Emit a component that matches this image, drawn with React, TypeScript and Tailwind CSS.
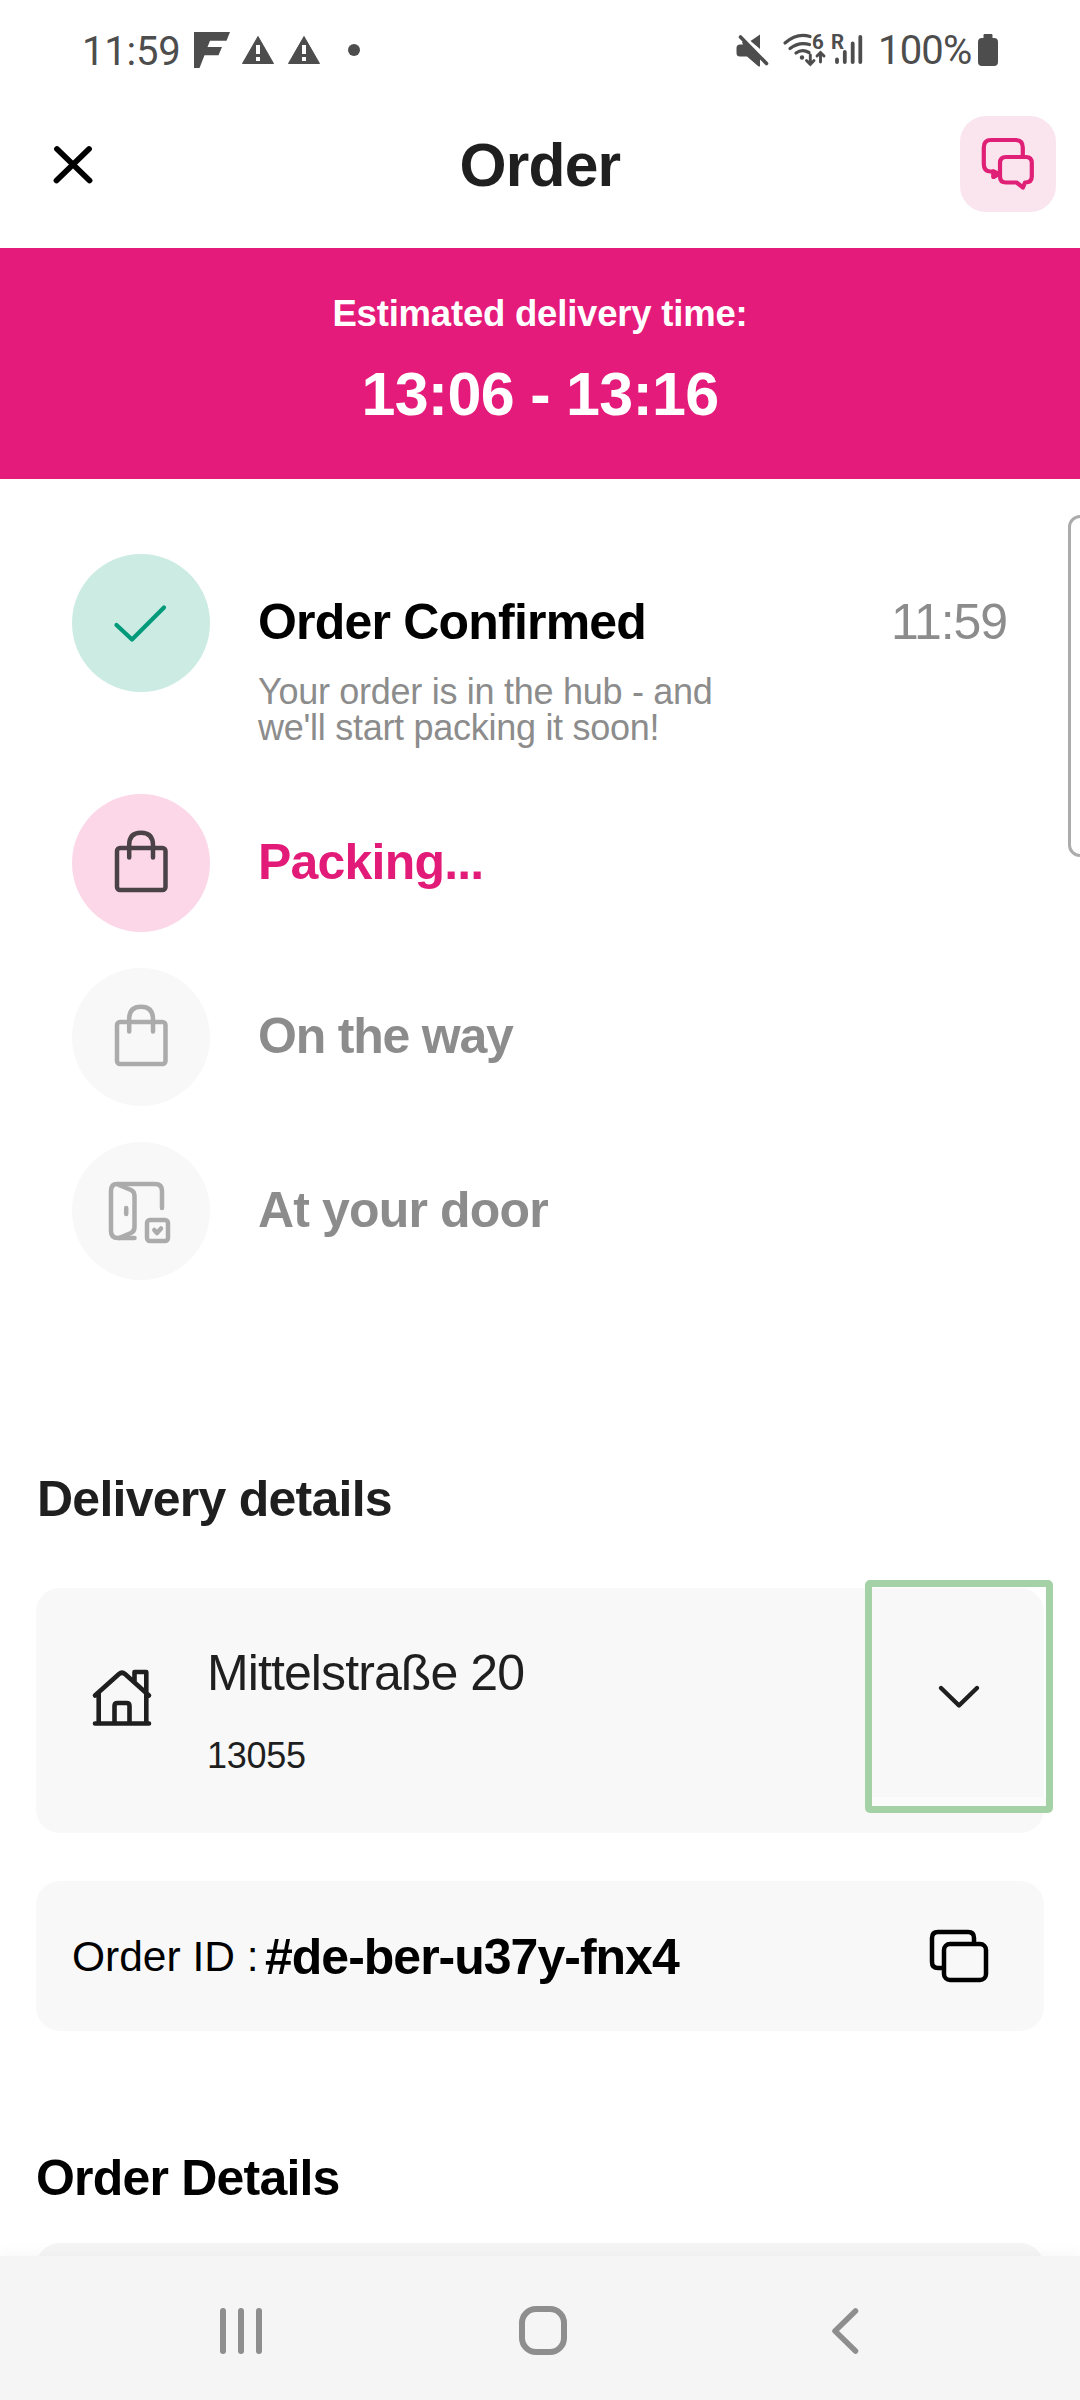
import type { ReactNode } from "react";

function StatusBar() {
  return (
    <div className="flex h-[100px] items-center pl-[82px] font-[Roboto,sans-serif] text-[40px] leading-[48px] text-[#4d4d4d]">
      <span className="mt-1 w-[112px] tracking-[-0.2px]">11:59</span>
      <svg width="36" height="36" viewBox="0 0 36 36" fill="currentColor">
        <path d="M0 0H36L32.5 8.7H16L13.5 15H28L24.5 23.2H10.5L5.5 36H0Z" />
      </svg>
      <WarningIcon className="ml-[12px]" />
      <WarningIcon className="ml-[14px]" />
      <span className="ml-[28px] size-[12px] rounded-full bg-[#4d4d4d]" />
      <svg className="ml-[376px]" width="33" height="34" viewBox="736 33 33 34" fill="currentColor">
        <path d="M760 34.500V49L750.500 41Z" />
        <path d="M736.500 48Q736.500 44.500 740 44.500H743L742 42L745 41L760 56V66Q760 67 758 66L747 56.500H740Q736.500 56.500 736.500 53Z" />
        <path d="M740.500 37L766.500 63.500" stroke="currentColor" strokeWidth="3.600" strokeLinecap="round" />
      </svg>
      <svg
        className="ml-[13px] overflow-visible"
        width="44"
        height="34"
        viewBox="782 33 44 34"
        fill="none"
        stroke="currentColor"
        strokeWidth="3.200"
        strokeLinecap="round"
      >
        <path d="M785 43Q797 32.500 810 36.500M790 48.500Q799 41.500 809.500 44.500M796 53Q802 48.500 809 52.500" />
        <circle cx="802" cy="57.500" r="2.200" fill="currentColor" stroke="none" />
        <path d="M810.300 55V64.500M806.500 60.500L810.300 64.500L814 60.500M820.500 62V53M817 56L820.500 52.500L824 56" strokeWidth="2.900" />
        <text x="812" y="49" fontSize="20.500" fontWeight="700" fill="currentColor" stroke="none">6</text>
      </svg>
      <svg
        className="ml-[6px] overflow-visible"
        width="32"
        height="34"
        viewBox="832 33 32 34"
        fill="none"
        stroke="currentColor"
        strokeWidth="3.800"
        strokeLinecap="round"
      >
        <path d="M837 59.500V62M844.800 52V62M852.700 43.500V62M860.300 37V62" />
        <text x="831" y="49" fontSize="20.500" fontWeight="700" fill="currentColor" stroke="none">R</text>
      </svg>
      <span className="mt-[2px] ml-[14px] w-[99px] tracking-[-0.8px]">100%</span>
      <svg className="ml-px" width="20" height="32" viewBox="0 0 20 32" fill="currentColor">
        <path d="M5.500 4V1Q5.500 0 6.500 0H13.500Q14.500 0 14.500 1V4H16Q20 4 20 8V28Q20 32 16 32H4Q0 32 0 28V8Q0 4 4 4Z" />
      </svg>
    </div>
  );
}

function WarningIcon({ className }: { className: string }) {
  return (
    <svg className={className} width="32" height="28" viewBox="0 0 32 28">
      <path d="M16 .5L31.500 27.500H.5Z" fill="currentColor" stroke="currentColor" strokeLinejoin="round" />
      <path d="M14 9h4v9h-4zM14 21h4v4h-4z" fill="#fff" />
    </svg>
  );
}

function Header() {
  return (
    <div className="grid h-[128px] grid-cols-[96px_1fr_96px] items-center px-6">
      <svg className="mt-px ml-[29px]" width="40" height="40" viewBox="53 145 40 40" fill="none" stroke="#000" strokeWidth="5.800" strokeLinecap="round">
        <path d="M57 149L89.500 180.500M89 149L56.500 180.500" />
      </svg>
      <h1 className="mt-px text-center text-[60.500px] leading-[64px] font-bold tracking-[-0.8px] text-[#1f1f1f]">Order</h1>
      <div className="size-24 rounded-[26px] bg-[#fae5ee]">
        <svg width="96" height="96" viewBox="960 116 96 96" fill="none" stroke="#e01f76" strokeWidth="4.200" strokeLinejoin="round" strokeLinecap="round">
          <path d="M1022.800 156V147.500Q1022.800 140 1015.500 140H991Q983.800 140 983.800 147.500V164Q983.800 171 990 171.500H993.500V177L999 173.500" />
          <path d="M993.500 171.500V177L999 174Z" fill="#e01f76" />
          <path d="M1006 157H1026Q1031.800 157 1031.800 163V176.500Q1031.800 182.500 1025 182.500L1023 187.500L1016.500 182.500H1006Q1000 182.500 1000 176.500V163Q1000 157 1006 157Z" />
        </svg>
      </div>
    </div>
  );
}

function BagIcon({ color }: { color: string }) {
  return (
    <svg width="138" height="138" viewBox="72 794 138 138" fill="none" stroke={color} strokeWidth="4.500" strokeLinecap="round">
      <rect x="117" y="848" width="48.500" height="42" rx="3" />
      <path d="M129.200 857.500V845Q129.200 832.800 141 832.800T153 845V857.500" />
    </svg>
  );
}

function CheckIcon() {
  return (
    <svg width="138" height="138" viewBox="72 554 138 138" fill="none" stroke="#009a7b" strokeWidth="4.200" strokeLinecap="round" strokeLinejoin="round">
      <path d="M116.500 625L132 639.500L164 607.500" />
    </svg>
  );
}

function DoorIcon() {
  return (
    <svg width="138" height="138" viewBox="72 1142 138 138" fill="none" stroke="#ababab" strokeWidth="4.500" strokeLinecap="round" strokeLinejoin="round">
      <path d="M162 1208V1191Q162 1184 155 1184H117Q111 1184 111 1191V1231Q111 1238 118 1238H134.500" />
      <path d="M119 1185L131 1190Q134.500 1191.500 134.500 1196V1227Q134.500 1231.500 131 1233L119 1238" />
      <path d="M126.200 1208V1214" />
      <rect x="147" y="1220" width="21" height="21" rx="3" />
      <path d="M154.300 1230L157 1233L161 1228.500" />
    </svg>
  );
}

type Step = { title: string; tone: string; circle: string; icon: ReactNode; note?: ReactNode; time?: string; height: string };

const steps: Step[] = [
  {
    title: "Order Confirmed",
    tone: "text-black tracking-[-0.8px]",
    circle: "bg-[#cbebe3]",
    icon: <CheckIcon />,
    time: "11:59",
    height: "h-[240px]",
    note: (
      <>
        Your order is in the hub - and
        <br />
        we'll start packing it soon!
      </>
    ),
  },
  {
    title: "Packing...",
    tone: "text-[#e31b78] tracking-[-0.8px]",
    circle: "bg-[#fcd7e8]",
    icon: <BagIcon color="#4b4247" />,
    height: "h-[174px]",
  },
  {
    title: "On the way",
    tone: "text-[#8c8c8c] tracking-[-1.2px]",
    circle: "bg-[#f8f8f8]",
    icon: <BagIcon color="#ababab" />,
    height: "h-[174px]",
  },
  {
    title: "At your door",
    tone: "text-[#8c8c8c] tracking-[-0.85px]",
    circle: "bg-[#f8f8f8]",
    icon: <DoorIcon />,
    height: "h-[138px]",
  },
];

function StepRow({ step }: { step: Step }) {
  return (
    <li className={`flex items-start ${step.height}`}>
      <div className={`size-[138px] shrink-0 rounded-full ${step.circle}`}>{step.icon}</div>
      <div className="ml-[48px] flex-1 pt-[40px]">
        <h2 className={`text-[50px] leading-[56px] font-bold ${step.tone}`}>{step.title}</h2>
        {step.note && (
          <p className="mt-[24px] text-[36px] leading-[36px] tracking-[-0.28px] whitespace-nowrap text-[#8c8c8c]">{step.note}</p>
        )}
      </div>
      {step.time && (
        <span className="pt-[40px] pr-px text-[50px] leading-[56px] tracking-[-1.1px] text-[#8c8c8c]">{step.time}</span>
      )}
    </li>
  );
}

function AddressCard() {
  return (
    <div className="relative mt-[61px] flex h-[245px] rounded-[24px] bg-[#f8f8f8] text-[#1f1f1f]">
      <svg className="mt-[80px] ml-[55px]" width="62" height="60" viewBox="91 1668 62 60" fill="none" stroke="currentColor" strokeWidth="4.600" strokeLinecap="round" strokeLinejoin="round">
        <path d="M95 1723.500H149M98.700 1723V1693M146.300 1723V1672H134.500V1682M95 1695.500L119 1674Q122 1671.500 125 1674L149 1695.500M114.500 1722V1706Q114.500 1703 117.500 1703H126.500Q129.500 1703 129.500 1706V1722" />
      </svg>
      <div className="ml-[54px] pt-[57px]">
        <p className="text-[50px] leading-[56px] tracking-[-0.9px]">Mittelstraße 20</p>
        <p className="mt-[33px] text-[36px] leading-[44px] tracking-[-0.3px]">13055</p>
      </div>
      <div className="absolute -top-[8px] -right-[9px] h-[233px] w-[188px] rounded-[5px] border-[7px] border-[#a5d1a6]">
        <div className="mt-[210px] h-[9px] bg-[#fbfbfb]" />
        <svg className="absolute top-[96px] left-[65px]" width="44" height="28" viewBox="937 1682 44 28" fill="none" stroke="currentColor" strokeWidth="4.400" strokeLinecap="round" strokeLinejoin="round">
          <path d="M941 1687L959 1704.500L977 1687" />
        </svg>
      </div>
    </div>
  );
}

function OrderIdCard() {
  return (
    <div className="mt-[48px] flex h-[150px] items-center rounded-[24px] bg-[#f8f8f8] pr-[54px] pl-[36px] text-black">
      <p className="mt-px flex flex-1 items-start whitespace-nowrap">
        <span className="w-[193px] text-[42.500px] leading-[56px]">Order ID :</span>
        <span className="text-[50px] leading-[56px] font-bold tracking-[-1px]">#de-ber-u37y-fnx4</span>
      </p>
      <svg width="62" height="56" viewBox="928 1928 62 56" fill="none" stroke="#000" strokeWidth="4.500" strokeLinejoin="round">
        <path d="M974 1943V1938Q974 1932 968 1932H938Q932 1932 932 1938V1962Q932 1968 938 1968H943" />
        <rect x="944" y="1944" width="42" height="36" rx="6" />
      </svg>
    </div>
  );
}

function NavBar() {
  return (
    <nav className="relative flex h-[144px] items-start bg-[#f5f5f5] pt-[50px] text-[#8e8e8e] shadow-[0_-4px_14px_rgba(0,0,0,0.03)]">
      <div className="mt-[2px] ml-[220px] flex gap-[12px]">
        <span className="h-[46px] w-[6px] rounded-full bg-current" />
        <span className="h-[46px] w-[6px] rounded-full bg-current" />
        <span className="h-[46px] w-[6px] rounded-full bg-current" />
      </div>
      <span className="ml-[257px] h-[49px] w-[48px] rounded-[17px] border-[6px] border-current" />
      <svg className="ml-[264px]" width="30" height="50" viewBox="831 2306 30 50" fill="none" stroke="currentColor" strokeWidth="5.500" strokeLinecap="round">
        <path d="M855.500 2311L835 2331L855.500 2351" strokeLinejoin="round" />
      </svg>
    </nav>
  );
}

export default function App() {
  return (
    <div className="relative h-[2400px] w-[1080px] overflow-hidden bg-white font-['Liberation_Sans',Arial,sans-serif]">
      <StatusBar />
      <Header />
      <section className="mt-[20px] h-[231px] bg-[#e41b7a] pt-[44px] text-center font-bold text-white">
        <p className="text-[36.500px] leading-[44px] tracking-[-0.2px]">Estimated delivery time:</p>
        <p className="mt-[22px] text-[61px] leading-[72px] tracking-[-0.7px]">13:06 - 13:16</p>
      </section>
      <ol className="px-[72px] pt-[75px]">
        {steps.map((step) => (
          <StepRow key={step.title} step={step} />
        ))}
      </ol>
      <main className="px-[36px] pt-[191px]">
        <h2 className="ml-px text-[50px] leading-[56px] font-bold tracking-[-0.75px] text-[#1f1f1f]">Delivery details</h2>
        <AddressCard />
        <OrderIdCard />
        <h2 className="mt-[119px] text-[50px] leading-[56px] font-bold tracking-[-0.8px] text-black">Order Details</h2>
        <div className="mt-[37px] h-[13px] overflow-hidden">
          <div className="h-[100px] rounded-[24px] bg-[#f5f5f5]" />
        </div>
      </main>
      <NavBar />
      <div className="absolute top-[515px] -right-[20px] h-[342px] w-[32px] rounded-[12px] border-[3px] border-[#acacac]" />
    </div>
  );
}
